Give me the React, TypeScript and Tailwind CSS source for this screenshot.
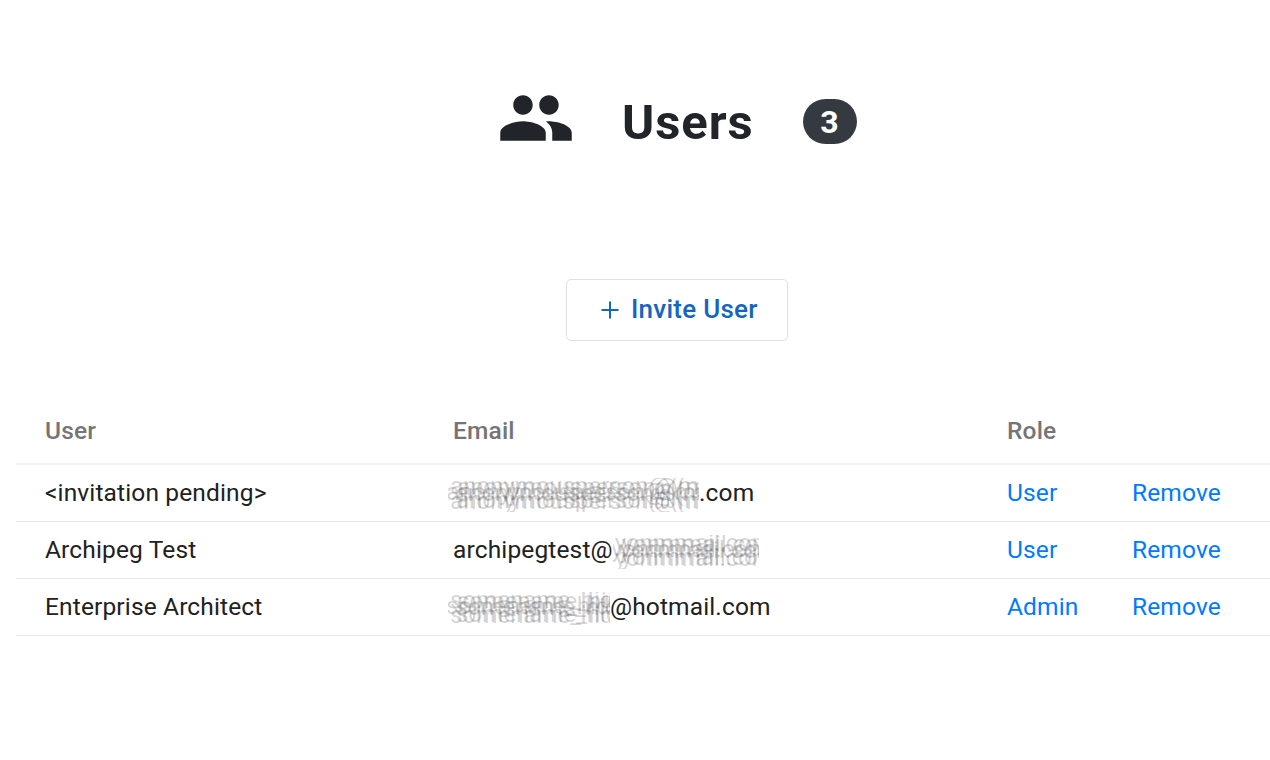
import { MdPeople } from 'react-icons/md';

type Email = { before?: string; smudge: string; width: string; after?: string };

const USERS: { name: string; email: Email; role: string }[] = [
  {
    name: '<invitation pending>',
    email: { smudge: 'anonymousperson@(mmail', width: 'w-[251px] -ml-[5px]', after: '.com' },
    role: 'User',
  },
  {
    name: 'Archipeg Test',
    email: { before: 'archipegtest@', smudge: 'yonmmail.com', width: 'w-[146px]' },
    role: 'User',
  },
  {
    name: 'Enterprise Architect',
    email: { smudge: 'somename_hidden', width: 'w-[162px] -ml-[5px]', after: '@hotmail.com' },
    role: 'Admin',
  },
];

const COLUMNS = 'grid grid-cols-[408px_554px_125px_1fr] items-center pl-[29px] pt-px';

// Overprinted copies of filler text keep the private part unreadable.
function Smudge({ text, width }: { text: string; width: string }) {
  return (
    <span
      aria-hidden="true"
      className={`relative mt-[3px] block h-[34px] shrink-0 select-none overflow-hidden whitespace-nowrap leading-[32px] tracking-[-0.3px] text-[#444]/22 ${width}`}
    >
      <span className="absolute -top-[8px] left-[2px]">{text}</span>
      <span className="absolute -top-[7px] left-[9px]">{text}</span>
      <span className="absolute -top-[2px] -left-[2px]">{text}</span>
      <span className="absolute -top-px left-[7px]">{text}</span>
      <span className="absolute top-[7px] left-[2px]">{text}</span>
      <span className="absolute top-[6px] left-[8px]">{text}</span>
    </span>
  );
}

function Header({ count }: { count: number }) {
  return (
    <div className="flex h-[92px] items-start pl-[497px] text-[#212529]">
      <MdPeople className="size-[78px]" />
      <h1 className="ml-[47px] mt-[15px] w-[180.5px] text-[49px] font-bold leading-[58px] tracking-[0.9px]">
        Users
      </h1>
      <span className="mt-5 flex h-[45px] w-[54px] items-center justify-center rounded-full bg-[#343a40] text-[32px] font-bold leading-none text-white">
        {count}
      </span>
    </div>
  );
}

export default function App() {
  return (
    <div className="h-[760px] overflow-hidden bg-white pt-[79px] font-[Roboto,sans-serif]">
      <Header count={USERS.length} />

      <button className="ml-[566px] mt-[108px] flex h-[62px] w-[222px] items-center rounded-[5px] border border-[#e0e0e0] pl-[34px] text-[26px] font-medium tracking-[0.25px] text-[#1565c0]">
        <svg viewBox="0 0 18 18" className="size-[18px]" stroke="currentColor" strokeWidth="2">
          <path d="M9 0.5v17M0.5 9h17" />
        </svg>
        <span className="ml-3 pb-px">Invite User</span>
      </button>

      <div className="ml-4 mt-[56px] text-[24.5px] tracking-[0.14px] text-[#212121]">
        <div className={`${COLUMNS} h-[68px] border-b-2 border-[#f2f2f2] font-medium tracking-[0.17px] text-[#757575]`}>
          <div className="pt-px">User</div>
          <div className="pt-px">Email</div>
          <div className="pt-px">Role</div>
        </div>
        {USERS.map(({ name, email, role }) => (
          <div key={name} className={`${COLUMNS} h-[57px] border-b border-[#e8e8e8]`}>
            <div>{name}</div>
            <div className="flex items-center">
              {email.before}
              <Smudge text={email.smudge} width={email.width} />
              {email.after}
            </div>
            <a className="text-[#007bff]">{role}</a>
            <a className="text-[#007bff]">Remove</a>
          </div>
        ))}
      </div>
    </div>
  );
}
